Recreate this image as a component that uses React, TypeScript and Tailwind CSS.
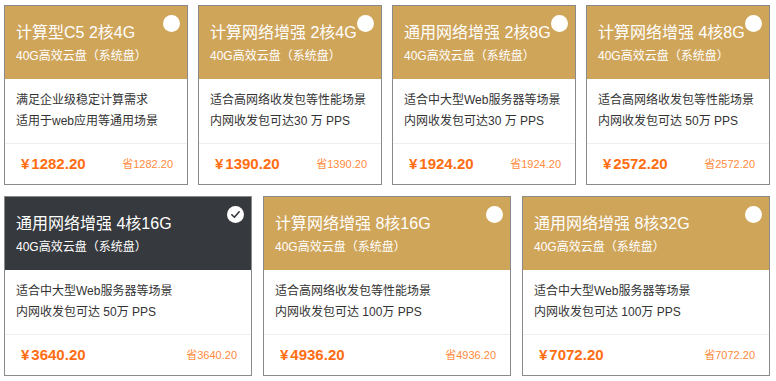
import React from 'react';

interface Plan {
    title: string;
    desc: string[];
    price: string;
    selected?: boolean;
}

const row1: Plan[] = [
    { title: '计算型C5 2核4G', desc: ['满足企业级稳定计算需求', '适用于web应用等通用场景'], price: '1282.20' },
    { title: '计算网络增强 2核4G', desc: ['适合高网络收发包等性能场景', '内网收发包可达30 万 PPS'], price: '1390.20' },
    { title: '通用网络增强 2核8G', desc: ['适合中大型Web服务器等场景', '内网收发包可达30 万 PPS'], price: '1924.20' },
    { title: '计算网络增强 4核8G', desc: ['适合高网络收发包等性能场景', '内网收发包可达 50万 PPS'], price: '2572.20' },
];

const row2: Plan[] = [
    { title: '通用网络增强 4核16G', desc: ['适合中大型Web服务器等场景', '内网收发包可达 50万 PPS'], price: '3640.20', selected: true },
    { title: '计算网络增强 8核16G', desc: ['适合高网络收发包等性能场景', '内网收发包可达 100万 PPS'], price: '4936.20' },
    { title: '通用网络增强 8核32G', desc: ['适合中大型Web服务器等场景', '内网收发包可达 100万 PPS'], price: '7072.20' },
];

const PlanCard: React.FC<{ plan: Plan; width: string }> = ({ plan, width }) => {
    return (
        <div className={`relative ${width} h-[180px] border border-[#8a8a8a] bg-white flex flex-col`}>
            <div
                className={`h-[73px] pl-[11px] pt-[17px] text-white ${
                    plan.selected ? 'bg-[#36393d]' : 'bg-[#cfa55a]'
                }`}
            >
                <div className="text-[16px] leading-[20px] whitespace-nowrap">{plan.title}</div>
                <div className="mt-[5px] text-[12px] leading-[16px] whitespace-nowrap">40G高效云盘（系统盘）</div>
            </div>
            <div className="h-[64px] pl-[11px] pt-[11px] text-[12px] leading-[21px] text-[#333]">
                {plan.desc.map((d) => (
                    <div key={d} className="whitespace-nowrap">{d}</div>
                ))}
            </div>
            <div className="h-[41px] border-t border-[#eeeeee] flex items-center justify-between pl-[16px] pr-[14px]">
                <span className="text-[15px] font-bold text-[#ff6d12]">
                    ¥<span className="ml-[2px]">{plan.price}</span>
                </span>
                <span className="text-[11px] text-[#ff8a3d]">省{plan.price}</span>
            </div>
            {plan.selected ? (
                <span className="absolute top-[9px] right-[7px] w-[17px] h-[17px] rounded-full bg-white flex items-center justify-center">
                    <svg width="11" height="11" viewBox="0 0 12 12" fill="none">
                        <path d="M2 6.3 L4.8 9 L10 3" stroke="#36393d" strokeWidth="1.8" strokeLinecap="round" strokeLinejoin="round" />
                    </svg>
                </span>
            ) : (
                <span className="absolute top-[9px] right-[7px] w-[17px] h-[17px] rounded-full bg-white" />
            )}
        </div>
    );
};

export default function App() {
    return (
        <div
            className="w-[776px] h-[381px] bg-white pt-[5px] pl-[4px]"
            style={{ fontFamily: '"Liberation Sans", "Noto Sans CJK SC", sans-serif' }}
        >
            <div className="w-[766px] flex justify-between">
                {row1.map((p) => (
                    <PlanCard key={p.title} plan={p} width="w-[184px]" />
                ))}
            </div>
            <div className="w-[766px] mt-[11px] flex justify-between">
                {row2.map((p) => (
                    <PlanCard key={p.title} plan={p} width="w-[248px]" />
                ))}
            </div>
        </div>
    );
}
